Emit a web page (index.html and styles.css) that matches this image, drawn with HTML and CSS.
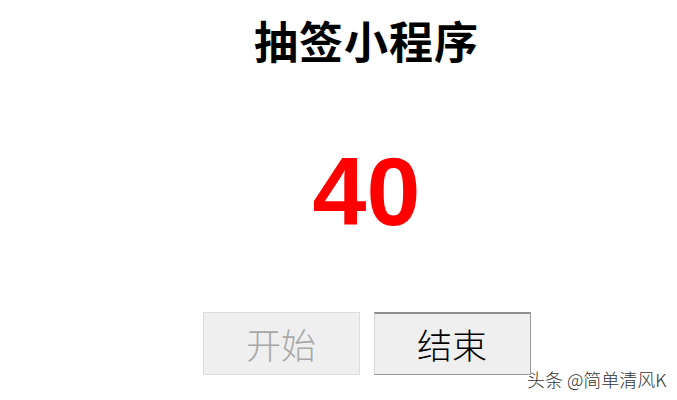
FILE: index.html
```html
<!DOCTYPE html>
<html>
<head>
<meta charset="utf-8">
<link rel="stylesheet" href="styles.css">
</head>
<body>
<div class="page">
  <h1 class="title">抽签小程序</h1>
  <div class="number">40</div>
  <div class="buttons">
    <button class="btn btn-disabled">开始</button>
    <button class="btn btn-active">结束</button>
  </div>
  <div class="watermark">头条 @简单清风K</div>
</div>
</body>
</html>
```
FILE: styles.css
```css
html, body {
  margin: 0;
  padding: 0;
  background: #ffffff;
}
.page {
  width: 677px;
  height: 400px;
  box-sizing: border-box;
  padding-left: 56px;
  position: relative;
  display: flex;
  flex-direction: column;
  align-items: center;
  font-family: "Noto Sans CJK SC", "Liberation Sans", sans-serif;
}
.title {
  margin: 10px 0 0 0;
  font-size: 44px;
  line-height: 60px;
  font-weight: 700;
  color: #000;
  letter-spacing: 1px;
}
.number {
  margin-top: 67px;
  font-family: "Liberation Sans", Arial, sans-serif;
  font-weight: 700;
  font-size: 97px;
  line-height: 110px;
  color: #ff0000;
}
.buttons {
  margin-top: 65px;
  display: flex;
  gap: 14px;
}
.btn {
  width: 157px;
  height: 63px;
  padding: 0;
  font-family: "Noto Sans CJK SC", sans-serif;
  font-weight: 300;
  font-size: 35px;
  line-height: 44px;
  background: #efefef;
  box-sizing: border-box;
}
.btn-disabled {
  color: #a8a8a8;
  border: 1px solid #dcdcdc;
}
.btn-active {
  color: #000;
  border-top: 2px solid #8f8f8f;
  border-left: 1px solid #d6d6d6;
  border-right: 1px solid #9a9a9a;
  border-bottom: 1px solid #9a9a9a;
}
.watermark {
  position: absolute;
  left: 527px;
  top: 366px;
  font-size: 18px;
  font-weight: 300;
  line-height: 26px;
  color: #333;
  text-shadow: 0 0 2px #fff;
}
```
